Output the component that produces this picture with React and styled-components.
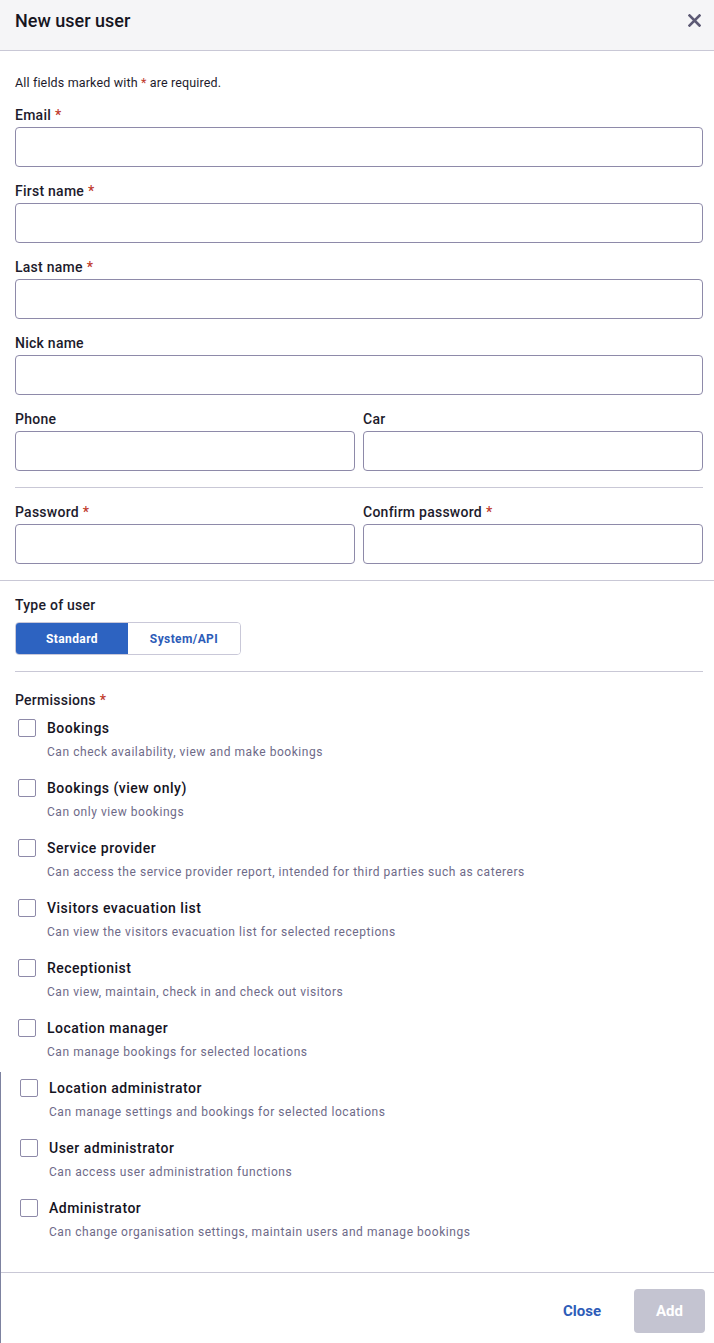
import React, { useState } from "react";
import styled, { createGlobalStyle } from "styled-components";

const GlobalStyle = createGlobalStyle`
  html, body {
    margin: 0;
    padding: 0;
    background: #ffffff;
  }
  body {
    font-family: Roboto, "Liberation Sans", Arial, sans-serif;
    color: #1d1b2c;
  }
  * {
    box-sizing: border-box;
  }
`;

const permissions = [
  ["Bookings", "Can check availability, view and make bookings"],
  ["Bookings (view only)", "Can only view bookings"],
  ["Service provider", "Can access the service provider report, intended for third parties such as caterers"],
  ["Visitors evacuation list", "Can view the visitors evacuation list for selected receptions"],
  ["Receptionist", "Can view, maintain, check in and check out visitors"],
  ["Location manager", "Can manage bookings for selected locations"],
];

const lowerPermissions = [
  ["Location administrator", "Can manage settings and bookings for selected locations"],
  ["User administrator", "Can access user administration functions"],
  ["Administrator", "Can change organisation settings, maintain users and manage bookings"],
];

function Required() {
  return <Star>*</Star>;
}

function Field({ label, required }) {
  return (
    <FieldBox>
      <Label>
        {label}
        {required && <Required />}
      </Label>
      <Input />
    </FieldBox>
  );
}

function Permission({ title, text }) {
  return (
    <PermRow>
      <Check type="checkbox" />
      <PermText>
        <PermTitle>{title}</PermTitle>
        <PermDesc>{text}</PermDesc>
      </PermText>
    </PermRow>
  );
}

export default function App() {
  const [type, setType] = useState("standard");
  return (
    <Dialog>
      <GlobalStyle />
      <Header>
        <Title>New user user</Title>
        <CloseIcon aria-label="close">
          <svg width="13" height="13" viewBox="0 0 13 13">
            <path d="M1.5 1.5 L11.5 11.5 M11.5 1.5 L1.5 11.5" stroke="#5d5a75" strokeWidth="2.6" strokeLinecap="square" />
          </svg>
        </CloseIcon>
      </Header>

      <Body>
        <Note>
          All fields marked with <Star>*</Star> are required.
        </Note>
        <Field label="Email" required />
        <Field label="First name" required />
        <Field label="Last name" required />
        <Field label="Nick name" />
        <Pair>
          <Field label="Phone" />
          <Field label="Car" />
        </Pair>
        <Divider />
        <Pair>
          <Field label="Password" required />
          <Field label="Confirm password" required />
        </Pair>
      </Body>

      <FullRule />

      <Section>
        <Label>Type of user</Label>
        <Segmented>
          <Segment active={type === "standard"} onClick={() => setType("standard")}>
            Standard
          </Segment>
          <Segment active={type === "api"} onClick={() => setType("api")}>
            System/API
          </Segment>
        </Segmented>
        <Divider />
        <Label>
          Permissions
          <Required />
        </Label>
        <PermList>
          {permissions.map(([t, d]) => (
            <Permission key={t} title={t} text={d} />
          ))}
        </PermList>
      </Section>

      <Stitched>
        <PermList>
          {lowerPermissions.map(([t, d]) => (
            <Permission key={t} title={t} text={d} />
          ))}
        </PermList>
        <Footer>
          <TextButton>Close</TextButton>
          <AddButton disabled>Add</AddButton>
        </Footer>
      </Stitched>
    </Dialog>
  );
}

const Dialog = styled.div`
  width: 714px;
  height: 1343px;
  background: #fff;
  display: flex;
  flex-direction: column;
  overflow: hidden;
`;

const Header = styled.div`
  height: 51px;
  flex-shrink: 0;
  background: #f5f5f7;
  border-bottom: 1px solid #c9c8d6;
  display: flex;
  align-items: flex-start;
  justify-content: space-between;
  padding: 10px 13px 0 15px;
`;

const Title = styled.h1`
  margin: 0;
  font-size: 18px;
  line-height: 22px;
  font-weight: 500;
  color: #17151f;
`;

const CloseIcon = styled.button`
  border: none;
  background: none;
  padding: 0;
  margin-top: 4px;
  width: 13px;
  height: 13px;
  display: flex;
  align-items: center;
  justify-content: center;
  cursor: pointer;
`;

const Body = styled.div`
  padding: 24px 11px 0 15px;
  display: flex;
  flex-direction: column;
`;

const Note = styled.p`
  margin: 0 0 16px;
  font-size: 12.5px;
  line-height: 16px;
  letter-spacing: 0.15px;
  color: #1d1b2c;
`;

const Star = styled.span`
  color: #c0392b;
  margin-left: 4px;
  font-weight: 500;
  ${Note} & {
    margin: 0;
    font-weight: 400;
  }
`;

const FieldBox = styled.div`
  display: flex;
  flex-direction: column;
  flex: 1;
  min-width: 0;
  margin-bottom: 16px;
`;

const Label = styled.label`
  display: block;
  font-size: 14px;
  font-weight: 500;
  line-height: 16px;
  letter-spacing: 0.25px;
  color: #1d1b2c;
  margin-bottom: 4px;
`;

const Input = styled.input`
  height: 40px;
  width: 100%;
  border: 1px solid #8e8aa9;
  border-radius: 4px;
  padding: 0 10px;
  font: inherit;
  font-size: 14px;
  outline: none;
`;

const Pair = styled.div`
  display: flex;
  gap: 8px;
`;

const Divider = styled.hr`
  border: none;
  border-top: 1px solid #c9c8d6;
  margin: 0 0 16px;
  width: 100%;
`;

const FullRule = styled.hr`
  border: none;
  border-top: 1px solid #c9c8d6;
  margin: 0;
  flex-shrink: 0;
`;

const Section = styled.div`
  padding: 16px 11px 0 15px;
  display: flex;
  flex-direction: column;

  ${Divider} {
    margin: 16px 0 20px;
  }
`;

const Segmented = styled.div`
  display: flex;
  width: 226px;
  height: 33px;
  border: 1px solid #c9c8d8;
  border-radius: 4px;
  overflow: hidden;
  margin-top: 5px;
`;

const Segment = styled.button`
  flex: 1;
  border: none;
  background: ${(p) => (p.active ? "#2d63c1" : "#ffffff")};
  color: ${(p) => (p.active ? "#ffffff" : "#2d5cb8")};
  font-family: Roboto, "Liberation Sans", Arial, sans-serif;
  font-size: 12px;
  font-weight: 700;
  letter-spacing: 0.4px;
  cursor: pointer;
`;

const PermList = styled.div`
  display: flex;
  flex-direction: column;
  padding-left: 3px;
`;

const PermRow = styled.div`
  display: flex;
  align-items: flex-start;
  gap: 11px;
  height: 60px;
  padding-top: 6px;
`;

const Check = styled.input`
  appearance: none;
  width: 18px;
  height: 18px;
  margin: 1px 0 0;
  border: 1px solid #8e8aa9;
  border-radius: 2px;
  background: #fff;
  flex-shrink: 0;
`;

const PermText = styled.div`
  display: flex;
  flex-direction: column;
  gap: 6px;
`;

const PermTitle = styled.span`
  font-size: 14px;
  font-weight: 500;
  line-height: 20px;
  letter-spacing: 0.5px;
  color: #15131e;
`;

const PermDesc = styled.span`
  font-size: 12px;
  line-height: 16px;
  letter-spacing: 0.55px;
  color: #6e6a88;
`;

const Stitched = styled.div`
  border-left: 1px solid #7d82a0;
  padding: 0 11px 0 16px;
  display: flex;
  flex-direction: column;
  flex: 1;
`;

const Footer = styled.div`
  margin: 20px -11px 0 -16px;
  border-top: 1px solid #c9c8d6;
  display: flex;
  justify-content: flex-end;
  align-items: center;
  gap: 33px;
  padding: 16px 9px 10px 0;
`;

const TextButton = styled.button`
  border: none;
  background: none;
  color: #2d5cb8;
  font-family: Roboto, "Liberation Sans", Arial, sans-serif;
  font-size: 15px;
  font-weight: 700;
  cursor: pointer;
  padding: 0;
`;

const AddButton = styled.button`
  width: 71px;
  height: 44px;
  border: none;
  border-radius: 4px;
  background: #c4c4d1;
  color: #ffffff;
  font-family: Roboto, "Liberation Sans", Arial, sans-serif;
  font-size: 15px;
  font-weight: 700;
`;
